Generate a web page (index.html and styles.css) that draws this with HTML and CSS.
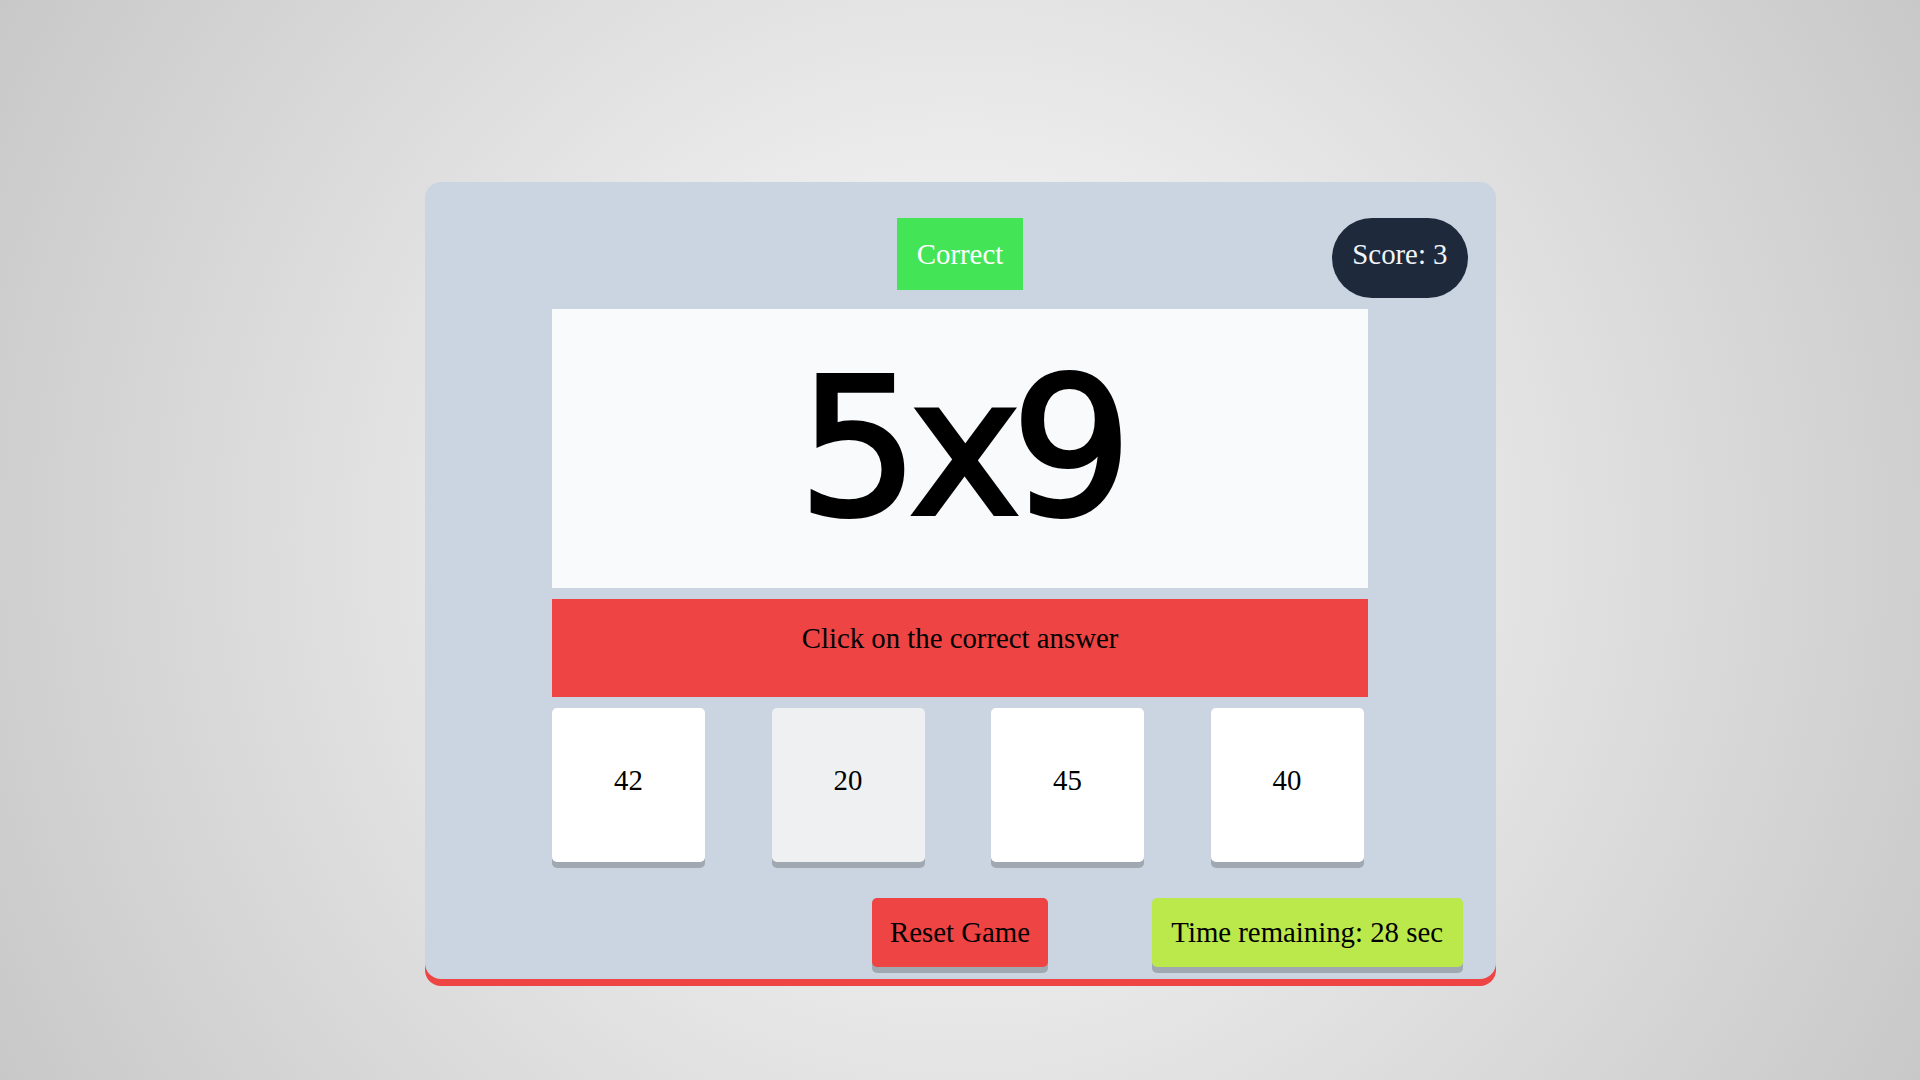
FILE: index.html
```html
<!DOCTYPE html>
<html lang="en">
<head>
<meta charset="utf-8">
<title>Multiplication Game</title>
<link rel="stylesheet" href="styles.css">
</head>
<body>
  <main class="game">
    <header class="game-header">
      <div class="status status-correct">Correct</div>
      <div class="score">Score: 3</div>
    </header>
    <section class="question">5x9</section>
    <div class="instruction">Click on the correct answer</div>
    <div class="choices">
      <div class="choice">42</div>
      <div class="choice choice-hover">20</div>
      <div class="choice">45</div>
      <div class="choice">40</div>
    </div>
    <footer class="game-footer">
      <div class="btn btn-reset">Reset Game</div>
      <div class="btn btn-time">Time remaining: 28 sec</div>
    </footer>
  </main>
</body>
</html>
```

FILE: styles.css
```css
html, body {
  margin: 0;
  padding: 0;
}

body {
  width: 1920px;
  height: 1080px;
  overflow: hidden;
  font-family: "Liberation Serif", "Times New Roman", serif;
  font-size: 28.8px;
  color: #000;
  background: radial-gradient(circle farthest-corner at 50% 50%, #eeeeee 30%, #c8c8c8 100%);
}

.game {
  box-sizing: border-box;
  width: 1071px;
  height: 797px;
  margin: 182px auto 0;
  padding: 36px 0 12px;
  background: #cbd5e1;
  border-radius: 16px;
  box-shadow: 0 7px 0 #ef4444;
  display: flex;
  flex-direction: column;
  align-items: center;
}

.game-header {
  box-sizing: border-box;
  width: 100%;
  padding: 0 28px;
  height: 80px;
  display: grid;
  grid-template-columns: 1fr auto 1fr;
  align-items: start;
}

.status {
  grid-column: 2;
  height: 72px;
  padding: 0 20px;
  display: flex;
  align-items: center;
  justify-content: center;
  color: #ffffff;
}

.status-correct {
  background: #44e457;
}

.score {
  grid-column: 3;
  justify-self: end;
  box-sizing: border-box;
  height: 80px;
  padding: 0 20px 8px;
  border-radius: 40px;
  background: #1e293b;
  color: #f1f5f9;
  display: flex;
  align-items: center;
}

.question {
  margin-top: 11px;
  width: 816px;
  height: 279px;
  background: #f8fafc;
  display: flex;
  align-items: center;
  justify-content: center;
  font-family: "Comic Sans MS", "DejaVu Sans", sans-serif;
  font-size: 190px;
  letter-spacing: -10px;
  -webkit-text-stroke: 4px #000;
  color: #000;
}

.instruction {
  box-sizing: border-box;
  margin-top: 11px;
  width: 816px;
  height: 98px;
  padding-top: 23px;
  background: #ef4444;
  text-align: center;
  line-height: 33px;
}

.choices {
  margin-top: 11px;
  width: 816px;
  display: flex;
  gap: 66.5px;
}

.choice {
  box-sizing: border-box;
  width: 153px;
  height: 154px;
  padding-bottom: 10px;
  background: #ffffff;
  border-radius: 5px;
  box-shadow: 0 6px 0 #a0a9b2;
  display: flex;
  align-items: center;
  justify-content: center;
}

.choice-hover {
  background: #eff0f2;
}

.game-footer {
  box-sizing: border-box;
  width: 100%;
  margin-top: 36px;
  padding: 0 28px;
  display: grid;
  grid-template-columns: 1fr auto 1fr;
}

.btn {
  height: 69px;
  border-radius: 5px;
  box-shadow: 0 6px 0 #a0a9b2;
  display: flex;
  align-items: center;
  justify-content: center;
  color: #000;
}

.btn-reset {
  grid-column: 2;
  padding: 0 18px;
  background: #ef4444;
}

.btn-time {
  grid-column: 3;
  justify-self: end;
  margin-right: 5px;
  padding: 0 19.5px;
  background: #bbe84a;
}
```
